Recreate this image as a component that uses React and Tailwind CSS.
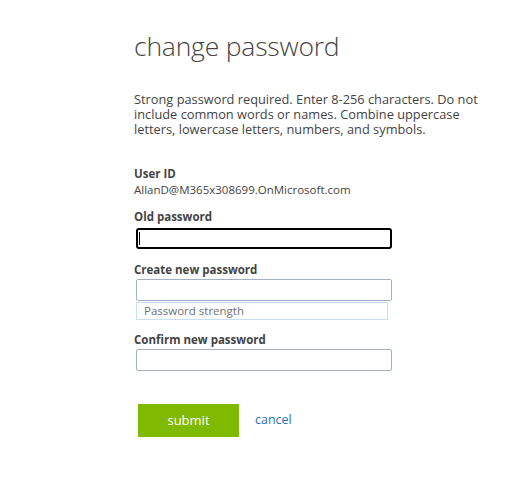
import React from 'react';

export default function App() {
  return (
    <div className="w-[520px] h-[488px] bg-white" style={{ fontFamily: '"Open Sans", "Noto Sans", sans-serif' }}>
      <div className="pl-[134px] pt-[28px] w-[500px]">
        <h1 className="text-[26.5px] leading-[36px] font-light text-[#444] tracking-[-0.2px]">change password</h1>

        <p className="mt-[28px] text-[12.8px] leading-[15px] text-[#444] w-[366px]">
          Strong password required. Enter 8-256 characters. Do not include common words or names. Combine uppercase letters, lowercase letters, numbers, and symbols.
        </p>

        <div className="mt-[29px] text-[11.5px] text-[#444]">
          <div className="font-bold leading-[15px]">User ID</div>
          <div className="leading-[17px]">AllanD@M365x308699.OnMicrosoft.com</div>

          <div className="mt-[11px] font-bold leading-[16px]">Old password</div>
          <div className="mt-[3px] ml-[2px] w-[256px] h-[21px] border-2 border-black rounded-[3px] flex items-center pl-[1px]">
            <div className="w-px h-[13px] bg-black" />
          </div>

          <div className="mt-[13px] font-bold leading-[16px]">Create new password</div>
          <div className="mt-[1px] ml-[2px] w-[256px] h-[22px] border border-[#a3b1c2] rounded-[2px]" />
          <div className="mt-[1px] ml-[2px] w-[252px] h-[18px] border border-[#c6e0f2] flex items-center pl-[7px] text-[#707070] leading-none">
            Password strength
          </div>

          <div className="mt-[12px] font-bold leading-[16px]">Confirm new password</div>
          <div className="mt-[1px] ml-[2px] w-[256px] h-[22px] border border-[#a3b1c2] rounded-[2px]" />

          <div className="mt-[33px] ml-[4px] flex items-center">
            <button className="w-[101px] h-[33px] bg-[#7fba00] text-white text-[13px]">submit</button>
            <a className="ml-[16px] text-[12.5px] text-[#2e6fb7]">cancel</a>
          </div>
        </div>
      </div>
    </div>
  );
}
